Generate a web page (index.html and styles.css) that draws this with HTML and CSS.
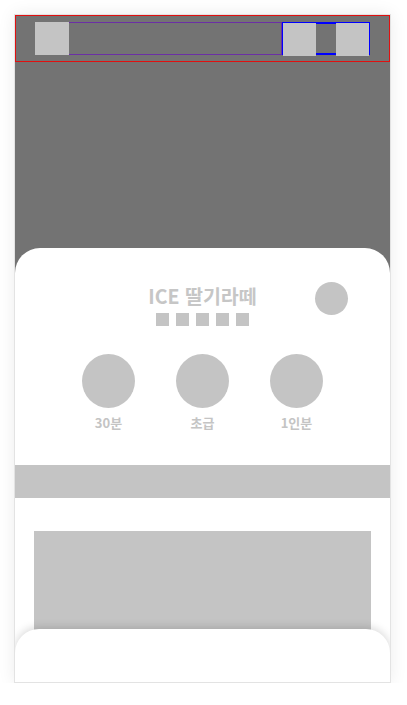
FILE: index.html
```html
<!DOCTYPE html>
<html lang="ko">
<head>
<meta charset="utf-8">
<title>ICE 딸기라떼</title>
<link rel="stylesheet" href="styles.css">
</head>
<body>
<div class="phone">
  <section class="hero">
    <header class="topbar">
      <div class="topbar-left">
        <div class="sq"></div>
      </div>
      <div class="topbar-right">
        <div class="sq"></div>
        <div class="sq"></div>
      </div>
    </header>
  </section>
  <section class="sheet">
    <div class="title-row">
      <div class="title-block">
        <h1 class="title">ICE 딸기라떼</h1>
        <div class="stars">
          <span></span><span></span><span></span><span></span><span></span>
        </div>
      </div>
      <div class="fav"></div>
    </div>
    <div class="stats">
      <div class="stat"><div class="stat-icon"></div><div class="stat-label">30분</div></div>
      <div class="stat"><div class="stat-icon"></div><div class="stat-label">초급</div></div>
      <div class="stat"><div class="stat-icon"></div><div class="stat-label">1인분</div></div>
    </div>
    <div class="band"></div>
    <div class="content">
      <div class="block"></div>
    </div>
  </section>
  <div class="bottombar"></div>
</div>
</body>
</html>
```

FILE: styles.css
```css
* { box-sizing: border-box; margin: 0; padding: 0; }
html, body { background: #fff; }
body {
  font-family: "Noto Sans CJK KR", "Noto Sans", sans-serif;
  padding: 14px 0 0 14px;
}
.phone {
  position: relative;
  width: 377px;
  height: 669px;
  border: 1px solid #e3e3e3;
  overflow: hidden;
  background: #fff;
  box-shadow: 0 0 16px rgba(0,0,0,0.08);
}
.hero {
  height: 258px;
  background: #737373;
}
.topbar {
  height: 47px;
  border: 1px solid #e01010;
  padding: 6px 19px 0 19px;
  display: flex;
}
.sq { width: 34px; height: 33px; background: #c4c4c4; }
.topbar-left {
  flex: 1;
  height: 33px;
  border: 1px solid #6b2fa5;
  border-left: none;
}
.topbar-left .sq { margin-top: -1px; }
.topbar-right {
  width: 88px;
  height: 33px;
  display: flex;
  gap: 20px;
  box-shadow: inset 0 0 0 2px #0000ff;
  padding: 1px 0 0 1px;
}
.topbar-right .sq { width: 33px; }
.sheet {
  position: relative;
  margin-top: -25px;
  background: #fff;
  border-radius: 25px 25px 0 0;
}
.title-row {
  display: grid;
  grid-template-columns: 1fr auto 1fr;
  padding-top: 34px;
}
.title-block {
  grid-column: 2;
  padding-top: 2px;
  display: flex;
  flex-direction: column;
  align-items: center;
}
.title {
  font-size: 19.5px;
  line-height: 24px;
  font-weight: 700;
  color: #c6c6c6;
}
.stars { display: flex; gap: 7px; margin-top: 5px; }
.stars span { width: 13px; height: 13px; background: #c4c4c4; }
.fav {
  grid-column: 3;
  justify-self: end;
  width: 33px;
  height: 33px;
  border-radius: 50%;
  background: #c4c4c4;
  margin-right: 42px;
}
.stats {
  display: flex;
  justify-content: center;
  gap: 41px;
  margin-top: 28px;
  padding-bottom: 34px;
}
.stat { width: 53px; display: flex; flex-direction: column; align-items: center; }
.stat-icon { width: 53px; height: 54px; border-radius: 50%; background: #c4c4c4; }
.stat-label {
  margin-top: 7px;
  font-size: 13px;
  line-height: 16px;
  font-weight: 700;
  color: #c4c4c4;
  white-space: nowrap;
}
.band { height: 33px; background: #c4c4c4; }
.content { padding: 33px 19px 0 19px; }
.block { height: 200px; background: #c4c4c4; }
.bottombar {
  position: absolute;
  left: 0;
  right: 0;
  bottom: 0;
  height: 53px;
  background: #fff;
  border-radius: 24px 24px 0 0;
  box-shadow: 0 -2px 8px rgba(0,0,0,0.15);
}
```
